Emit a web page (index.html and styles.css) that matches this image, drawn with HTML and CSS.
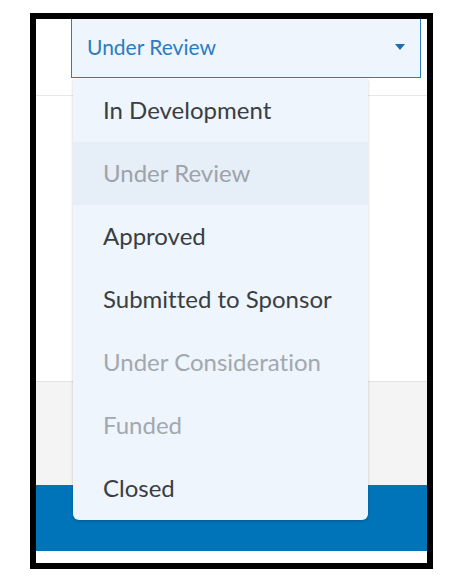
FILE: index.html
```html
<!DOCTYPE html>
<html lang="en">
<head>
  <meta charset="UTF-8">
  <meta name="viewport" content="width=device-width, initial-scale=1.0">
  <title>Proposal Status</title>
  <link rel="stylesheet" href="styles.css">
</head>
<body>
  <div class="frame">
    <div class="toolbar">
      <div class="status-select">
        <span class="status-value">Under Review</span>
        <svg class="caret" width="10" height="6" viewBox="0 0 10 6"><path d="M0 0h10L5 6z" fill="#1d6fb0"/></svg>
      </div>
    </div>
    <div class="panel"></div>
    <div class="footer-area"></div>
    <div class="action-bar"></div>
    <div class="bottom-strip"></div>

    <ul class="status-menu">
      <li class="menu-item">In Development</li>
      <li class="menu-item is-current">Under Review</li>
      <li class="menu-item">Approved</li>
      <li class="menu-item">Submitted to Sponsor</li>
      <li class="menu-item is-disabled">Under Consideration</li>
      <li class="menu-item is-disabled">Funded</li>
      <li class="menu-item">Closed</li>
    </ul>
  </div>
</body>
</html>
```

FILE: styles.css
```css
:root {
  --blue: #0074b8;
  --select-blue: #2b7cc0;
  --menu-bg: #eef5fd;
  --menu-hover: #e6eef7;
  --text-color: #3a3e43;
  --muted: #9ea3a9;
}

body {
  margin: 0;
  background: #fff;
  font-family: Lato, 'Open Sans', sans-serif;
  font-variant-ligatures: none;
}

.frame {
  position: relative;
  box-sizing: border-box;
  width: 403px;
  height: 556px;
  margin: 13px 0 0 30px;
  border: 6px solid #000;
  display: flex;
  flex-direction: column;
  overflow: hidden;
}

.toolbar {
  height: 76px;
  padding: 0 6px 0 35px;
  border-bottom: 1px solid #e7e7e7;
  flex-shrink: 0;
}

.status-select {
  box-sizing: border-box;
  height: 59px;
  display: flex;
  align-items: center;
  justify-content: space-between;
  padding: 0 15px 4px 15px;
  background: var(--menu-bg);
  border: 1px solid var(--select-blue);
  border-top: none;
}

.status-value {
  font-size: 21px;
  color: var(--select-blue);
}

.caret {
  margin-top: 2px;
}

.panel {
  height: 285px;
  flex-shrink: 0;
  border-bottom: 1px solid #e3e3e3;
}

.footer-area {
  height: 103px;
  flex-shrink: 0;
  background: #f4f4f4;
}

.action-bar {
  height: 66px;
  flex-shrink: 0;
  background: var(--blue);
}

.bottom-strip {
  flex: 1;
  background: #fff;
}

.status-menu {
  position: absolute;
  left: 37px;
  top: 60px;
  width: 295px;
  margin: 0;
  padding: 0;
  list-style: none;
  background: var(--menu-bg);
  border-radius: 0 0 6px 6px;
  box-shadow: 0 1px 3px rgba(0, 0, 0, 0.22);
}

.menu-item {
  box-sizing: border-box;
  height: 63px;
  display: flex;
  align-items: center;
  padding: 0 0 3px 30px;
  font-size: 24px;
  color: var(--text-color);
}

.menu-item.is-current {
  background: var(--menu-hover);
  color: var(--muted);
}

.menu-item.is-disabled {
  color: #a3a8ae;
}
```
